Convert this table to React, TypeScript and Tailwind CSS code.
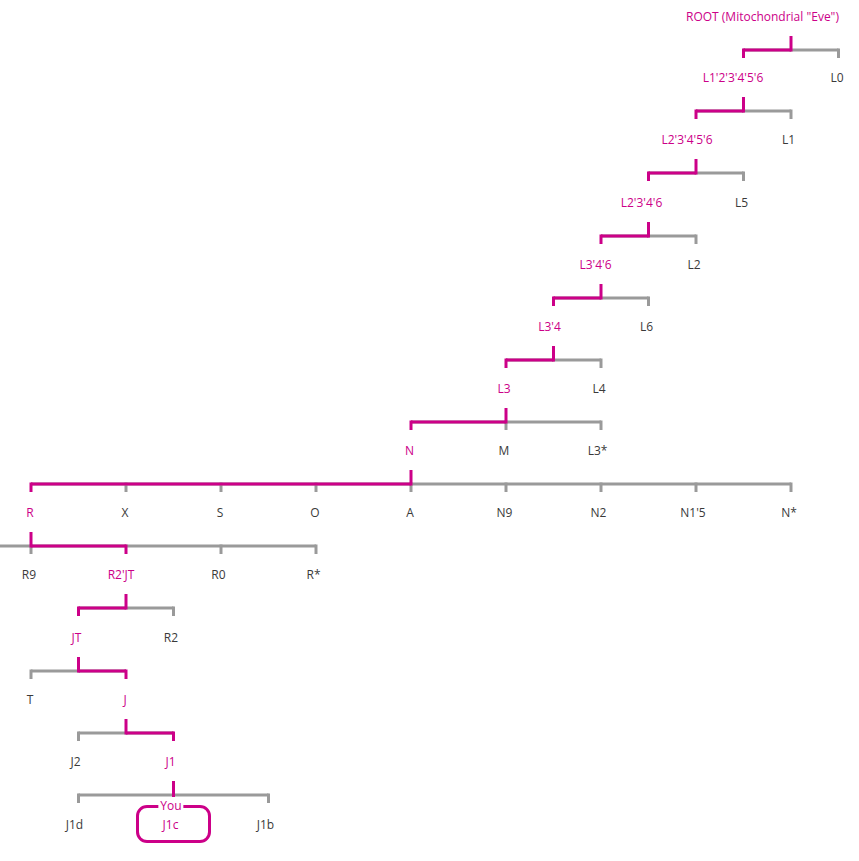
import React from "react";

const PINK = "#cc0088";
const GRAY = "#9a9a9a";

type Label = { text: string; x: number; y: number; on?: boolean };

// labels: x = visual centre, y = text centre
const labels: Label[] = [
  { text: "L1'2'3'4'5'6", x: 733, y: 78, on: true },
  { text: "L0", x: 837, y: 78 },
  { text: "L2'3'4'5'6", x: 687, y: 140, on: true },
  { text: "L1", x: 788.5, y: 140 },
  { text: "L2'3'4'6", x: 641.5, y: 203, on: true },
  { text: "L5", x: 741.5, y: 203 },
  { text: "L3'4'6", x: 595.5, y: 265, on: true },
  { text: "L2", x: 694, y: 265 },
  { text: "L3'4", x: 549.5, y: 327, on: true },
  { text: "L6", x: 646.5, y: 327 },
  { text: "L3", x: 504, y: 389, on: true },
  { text: "L4", x: 599, y: 389 },
  { text: "N", x: 409.5, y: 451, on: true },
  { text: "M", x: 504, y: 451 },
  { text: "L3*", x: 597.5, y: 451 },
  { text: "R", x: 30, y: 513, on: true },
  { text: "X", x: 125, y: 513 },
  { text: "S", x: 220, y: 513 },
  { text: "O", x: 315, y: 513 },
  { text: "A", x: 410, y: 513 },
  { text: "N9", x: 504.5, y: 513 },
  { text: "N2", x: 598.5, y: 513 },
  { text: "N1'5", x: 693, y: 513 },
  { text: "N*", x: 789, y: 513 },
  { text: "R9", x: 29, y: 575 },
  { text: "R2'JT", x: 121, y: 575, on: true },
  { text: "R0", x: 218.5, y: 575 },
  { text: "R*", x: 313.5, y: 575 },
  { text: "JT", x: 76.5, y: 638, on: true },
  { text: "R2", x: 171, y: 638 },
  { text: "T", x: 30, y: 700 },
  { text: "J", x: 125, y: 700, on: true },
  { text: "J2", x: 75.5, y: 762 },
  { text: "J1", x: 170.5, y: 762, on: true },
  { text: "J1d", x: 74.5, y: 825 },
  { text: "J1c", x: 170.5, y: 825, on: true },
  { text: "J1b", x: 265.5, y: 825 },
];

// brackets: parent label row y, stem x, span of children, pink child x, drop xs
type Bracket = { y: number; stem: number; from: number; to: number; pink: number; drops: number[] };

const brackets: Bracket[] = [
  { y: 17, stem: 791, from: 743.5, to: 838.5, pink: 743.5, drops: [743.5, 838.5] },
  { y: 78, stem: 743.5, from: 696, to: 791, pink: 696, drops: [696, 791] },
  { y: 140, stem: 696, from: 648.5, to: 743.5, pink: 648.5, drops: [648.5, 743.5] },
  { y: 203, stem: 648.5, from: 601, to: 696, pink: 601, drops: [601, 696] },
  { y: 265, stem: 601, from: 553.5, to: 648.5, pink: 553.5, drops: [553.5, 648.5] },
  { y: 327, stem: 553.5, from: 506, to: 601, pink: 506, drops: [506, 601] },
  { y: 389, stem: 506, from: 411, to: 601, pink: 411, drops: [411, 506, 601] },
  { y: 451, stem: 411, from: 31, to: 791, pink: 31, drops: [31, 126, 221, 316, 411, 506, 601, 696, 791] },
  { y: 513, stem: 31, from: 0, to: 316, pink: 126, drops: [31, 126, 221, 316] },
  { y: 575, stem: 126, from: 78.5, to: 173.5, pink: 78.5, drops: [78.5, 173.5] },
  { y: 638, stem: 78.5, from: 31, to: 126, pink: 126, drops: [31, 126] },
  { y: 700, stem: 126, from: 78.5, to: 173.5, pink: 173.5, drops: [78.5, 173.5] },
];

function Lines() {
  return (
    <svg className="absolute inset-0" width="859" height="861" viewBox="0 0 859 861">
      {brackets.map((b, i) => {
        const h = b.y + 33;
        return (
          <g key={i} strokeWidth={3} fill="none">
            <line x1={b.from} y1={h} x2={b.to} y2={h} stroke={GRAY} />
            {b.drops
              .filter((d) => d !== b.pink)
              .map((d) => (
                <line key={d} x1={d} y1={h - 1.5} x2={d} y2={b.y + 41} stroke={GRAY} />
              ))}
            <line x1={Math.min(b.stem, b.pink)} y1={h} x2={Math.max(b.stem, b.pink)} y2={h} stroke={PINK} />
            <line x1={b.pink} y1={h - 1.5} x2={b.pink} y2={b.y + 41} stroke={PINK} />
            <line x1={b.stem} y1={b.y + 19} x2={b.stem} y2={h + 1.5} stroke={PINK} />
          </g>
        );
      })}
      {/* last split: J1 -> J1d / J1c / J1b */}
      <g strokeWidth={3} fill="none">
        <line x1={78.5} y1={795} x2={268.5} y2={795} stroke={GRAY} />
        <line x1={78.5} y1={793.5} x2={78.5} y2={803} stroke={GRAY} />
        <line x1={268.5} y1={793.5} x2={268.5} y2={803} stroke={GRAY} />
        <line x1={173.5} y1={781} x2={173.5} y2={797} stroke={PINK} />
      </g>
    </svg>
  );
}

export default function App() {
  return (
    <div
      className="relative h-[861px] w-full overflow-hidden bg-white text-[12px]"
      style={{ fontFamily: '"Open Sans", "Liberation Sans", sans-serif' }}
    >
      <Lines />

      <div className="absolute left-[686px] top-[8px] whitespace-nowrap leading-[18px] text-[#cc0088]">
        ROOT (Mitochondrial "Eve")
      </div>

      {labels.map((l) => (
        <div
          key={l.text}
          className={`absolute -translate-x-1/2 whitespace-nowrap leading-[18px] ${l.on ? "text-[#cc0088]" : "text-[#3a3a3a]"}`}
          style={{ left: l.x, top: l.y - 9 }}
        >
          {l.text}
        </div>
      ))}

      {/* "You" marker */}
      <div className="absolute left-[136px] top-[805px] h-[38px] w-[75px] rounded-[11px] border-[3px] border-[#cc0088]" />
      <div className="absolute left-[171px] top-[797px] -translate-x-1/2 bg-white px-[2px] leading-[18px] text-[#cc0088]">
        You
      </div>
    </div>
  );
}
